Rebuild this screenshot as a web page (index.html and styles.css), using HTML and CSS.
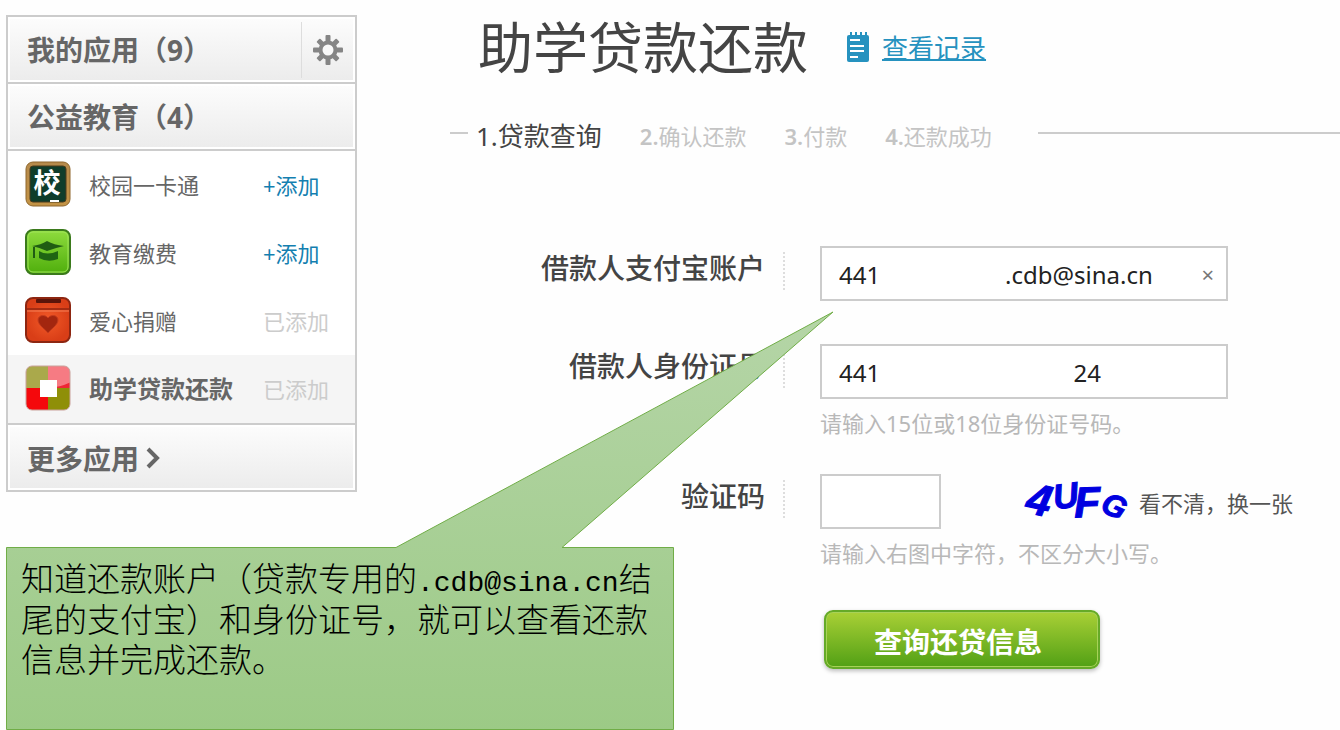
FILE: index.html
```html
<!DOCTYPE html>
<html lang="zh-CN">
<head>
<meta charset="utf-8">
<title>助学贷款还款</title>
<link rel="stylesheet" href="styles.css">
</head>
<body>
<div class="page">
  <aside class="sidebar">
    <div class="side-head">
      <h2>我的应用（9）</h2>
      <button class="gear" type="button" aria-label="设置">
        <svg width="30" height="30" viewBox="-15 -15 30 30">
          <g fill="#858585">
            <rect x="-2.5" y="-15" width="5" height="30" rx="1"/>
            <rect x="-15" y="-2.5" width="30" height="5" rx="1"/>
            <rect x="-2.5" y="-14" width="5" height="28" rx="1" transform="rotate(45)"/>
            <rect x="-2.5" y="-14" width="5" height="28" rx="1" transform="rotate(-45)"/>
            <circle r="9.5"/>
          </g>
          <circle r="5.5" fill="#f8f8f8"/>
        </svg>
      </button>
    </div>
    <div class="side-head"><h2>公益教育（4）</h2></div>
    <ul class="apps">
      <li class="app">
        <svg class="app-icon" viewBox="0 0 46 46">
          <defs><linearGradient id="wood" x2="0" y2="1"><stop offset="0" stop-color="#b58a4c"/><stop offset="1" stop-color="#c39345"/></linearGradient></defs>
          <rect x="1" y="1" width="44" height="44" rx="7" fill="url(#wood)" stroke="#8f672c"/>
          <rect x="5" y="5" width="36" height="36" rx="3" fill="#0f3d2b" stroke="#4a3a1c"/>
          <text class="icon-char" x="22" y="32" text-anchor="middle">校</text>
          <rect x="25" y="39" width="9" height="2" fill="#fff"/>
        </svg>
        <span class="app-name">校园一卡通</span><a class="add" href="#">+添加</a>
      </li>
      <li class="app">
        <svg class="app-icon" viewBox="0 0 46 46">
          <defs><linearGradient id="leaf" x2="0" y2="1"><stop offset="0" stop-color="#8fdc3e"/><stop offset="1" stop-color="#4fae0c"/></linearGradient></defs>
          <rect x="1" y="1" width="44" height="44" rx="7" fill="url(#leaf)" stroke="#3b7a1c" stroke-width="2"/>
          <rect x="3" y="3" width="40" height="40" rx="5" fill="none" stroke="#9fe45a"/>
          <path d="M7 17Q16 16 22 12Q29 16 39 17Q30 19 22 22Q16 19 7 17Z" fill="#205c13"/>
          <path d="M9 18V29" stroke="#205c13" stroke-width="2"/>
          <path d="M14 22Q22 27 33 22V30Q23 34 14 29Z" fill="#1f6413"/>
        </svg>
        <span class="app-name">教育缴费</span><a class="add" href="#">+添加</a>
      </li>
      <li class="app">
        <svg class="app-icon" viewBox="0 0 46 46">
          <defs><radialGradient id="box"><stop offset="0" stop-color="#f25a28"/><stop offset="1" stop-color="#d93e17"/></radialGradient></defs>
          <rect x="1" y="1" width="44" height="44" rx="7" fill="url(#box)" stroke="#8d2611" stroke-width="2"/>
          <rect x="11" y="2" width="25" height="4" rx="1" fill="#5b140a"/>
          <path d="M2 12H44" stroke="#a52c12" stroke-width="2"/>
          <path d="M2 14H44" stroke="#f68258"/>
          <path d="M23 36C20 32 13 28 13 23C13 18 20 17 23 21C26 17 33 18 33 23C33 28 26 32 23 36Z" fill="#a3260f" stroke="#c63c1d"/>
        </svg>
        <span class="app-name">爱心捐赠</span><span class="added">已添加</span>
      </li>
      <li class="app current">
        <svg class="app-icon" viewBox="0 0 46 46">
          <defs><clipPath id="round"><rect x="1" y="1" width="44" height="44" rx="6"/></clipPath></defs>
          <g clip-path="url(#round)">
            <rect width="23" height="23" fill="#aaa94b"/>
            <rect x="23" width="23" height="24" fill="#f67b83"/>
            <rect y="23" width="23" height="23" fill="#f5080c"/>
            <rect x="23" y="23" width="23" height="23" fill="#8f8f08"/>
            <path d="M23 23Q36 22 46 17V23Z" fill="#ee2635"/>
          </g>
          <rect x="1" y="1" width="44" height="44" rx="6" fill="none" stroke="#c9a29b"/>
          <rect x="15" y="15" width="17" height="17" fill="#fff"/>
        </svg>
        <span class="app-name">助学贷款还款</span><span class="added">已添加</span>
      </li>
    </ul>
    <a class="side-head more" href="#">更多应用
      <svg width="14" height="22" viewBox="0 0 14 22"><path d="M2 2L11 11L2 20" fill="none" stroke="#666" stroke-width="4"/></svg>
    </a>
  </aside>

  <main class="main">
    <header class="title-row">
      <h1>助学贷款还款</h1>
      <svg class="note" width="24" height="30" viewBox="0 0 24 30">
        <rect x="1" y="3" width="22" height="27" rx="2" fill="#2692bf"/>
        <path d="M5 0V4M10 0V4M15 0V4M20 0V4" stroke="#2692bf" stroke-width="2"/>
        <path d="M4 8H14M4 14H18M4 19H18M4 25H12" stroke="#fff" stroke-width="2"/>
      </svg>
      <a class="record" href="#">查看记录</a>
    </header>

    <ol class="steps">
      <li class="active">1.贷款查询</li>
      <li><b>2.</b>确认还款</li>
      <li><b>3.</b>付款</li>
      <li><b>4.</b>还款成功</li>
    </ol>

    <form class="form">
      <div class="row">
        <label for="account">借款人支付宝账户</label>
        <div class="field">
          <div class="input-wrap">
            <input id="account" type="text" value="441&nbsp;&nbsp;&nbsp;&nbsp;&nbsp;&nbsp;&nbsp;&nbsp;&nbsp;&nbsp;&nbsp;&nbsp;&nbsp;&nbsp;&nbsp;&nbsp;&nbsp;&nbsp;&nbsp;&nbsp;.cdb@sina.cn">
            <button class="clear" type="button" aria-label="清除">×</button>
          </div>
        </div>
      </div>
      <div class="row">
        <label for="idcard">借款人身份证号</label>
        <div class="field">
          <div class="input-wrap">
            <input id="idcard" type="text" value="441&nbsp;&nbsp;&nbsp;&nbsp;&nbsp;&nbsp;&nbsp;&nbsp;&nbsp;&nbsp;&nbsp;&nbsp;&nbsp;&nbsp;&nbsp;&nbsp;&nbsp;&nbsp;&nbsp;&nbsp;&nbsp;&nbsp;&nbsp;&nbsp;&nbsp;&nbsp;&nbsp;&nbsp;&nbsp;&nbsp;&nbsp;24">
          </div>
          <p class="hint">请输入15位或18位身份证号码。</p>
        </div>
      </div>
      <div class="row">
        <label for="captcha">验证码</label>
        <div class="field">
          <div class="captcha-row">
            <input id="captcha" class="short" type="text">
            <svg class="captcha" width="110" height="55" viewBox="0 0 110 55">
              <g class="captcha-char">
                <text x="6" y="41" font-size="44" transform="rotate(12 18 26)">4</text>
                <text x="32" y="34" font-size="35" transform="rotate(-8 44 22)">U</text>
                <text x="53" y="43" font-size="43" transform="rotate(-2 68 26)">F</text>
                <text x="81" y="42" font-size="31" transform="rotate(24 92 32)">G</text>
              </g>
            </svg>
            <a class="refresh" href="#">看不清，换一张</a>
          </div>
          <p class="hint">请输入右图中字符，不区分大小写。</p>
        </div>
      </div>
      <button class="submit" type="button">查询还贷信息</button>
    </form>
  </main>

  <div class="callout">
    <svg class="callout-shape" width="828" height="419" viewBox="0 0 828 419">
      <defs><linearGradient id="green" x2="0" y2="1"><stop offset="0" stop-color="#b5d5a7"/><stop offset="1" stop-color="#9cca86"/></linearGradient></defs>
      <path d="M.5 236.5H390L827 1L556 236.5H667.5V418.5H.5Z" fill="url(#green)" stroke="#70ad47"/>
    </svg>
    <p class="callout-text">知道还款账户（贷款专用的<span class="mono">.cdb@sina.cn</span>结<br>尾的支付宝）和身份证号，就可以查看还款<br>信息并完成还款。</p>
  </div>
</div>
</body>
</html>
```
FILE: styles.css
```css
* { box-sizing: border-box; }
body {
  margin: 0;
  background: #fefefe;
  color: #555;
  font-family: "Noto Sans", "Noto Sans CJK SC", sans-serif;
  font-size: 22px;
}
h1, h2, p, ul, ol { margin: 0; padding: 0; }
ul, ol { list-style: none; }
button, input { font: inherit; }
a { color: #147fb0; text-decoration: none; }

.page {
  position: relative;
  display: flex;
  align-items: flex-start;
  gap: 93px;
  min-height: 100vh;
  padding: 15px 0 0 6px;
}

/* Sidebar */
.sidebar {
  flex: 0 0 351px;
  border: 2px solid #ccc;
  background: #fff;
}
.side-head {
  display: flex;
  align-items: center;
  height: 65px;
  padding-left: 17px;
  border: 2px solid #fff;
  background: linear-gradient(#fcfcfc, #ececec);
  color: #666;
  font-size: 28px;
  font-weight: 700;
}
.side-head + .side-head { box-shadow: 0 -2px #ccc; margin-top: 2px; }
.side-head h2 { flex: 1; font-size: 28px; line-height: 40px; }
.gear {
  display: flex;
  align-items: center;
  justify-content: center;
  width: 52px;
  height: 56px;
  padding: 0;
  border: 0;
  border-left: 1px solid #ddd;
  background: none;
}
.apps {
  border-top: 2px solid #ccc;
  border-bottom: 2px solid #ccc;
}
.app {
  display: flex;
  align-items: center;
  height: 68px;
  padding: 0 24px 3px 17px;
}
.app.current { background: #f5f5f5; }
.app-icon { width: 46px; height: 46px; margin-right: 18px; }
.icon-char { font-size: 27px; font-weight: 700; fill: #fff; }
.app-name { flex: 1; color: #666; }
.current .app-name { font-size: 24px; font-weight: 700; }
.add, .added { width: 68px; }
.added { color: #ccc; }
.more { gap: 7px; }

/* Heading and steps */
.main { flex: 1; }
.title-row {
  display: flex;
  align-items: center;
  height: 64px;
  padding-left: 28px;
}
.title-row h1 {
  color: #444;
  font-size: 55px;
  font-weight: 400;
  line-height: 64px;
}
.note { margin: 0 12px 0 38px; }
.record {
  color: #2692bf;
  font-size: 26px;
  text-decoration: underline;
  text-decoration-thickness: 2px;
}
.steps {
  display: flex;
  align-items: center;
  gap: 38px;
  height: 40px;
  margin-top: 36px;
  color: #c4c4c4;
}
.steps::before, .steps::after {
  content: "";
  height: 2px;
  margin-bottom: 4px;
  background: #ccc;
}
.steps::before { width: 18px; margin-right: -30px; }
.steps::after { flex: 1; margin-left: 8px; }
.steps .active { color: #444; font-size: 26px; }
.steps b { font-weight: 600; }

/* Form */
.form { padding-top: 91px; }
.row { display: flex; align-items: flex-start; }
.row + .row { margin-top: 43px; }
.row + .row + .row { margin-top: 35px; }
.row label {
  width: 335px;
  height: 38px;
  margin-top: 6px;
  padding-right: 18px;
  border-right: 2px dotted #ddd;
  color: #444;
  font-size: 28px;
  font-weight: 500;
  line-height: 32px;
  text-align: right;
}
.field { padding-left: 35px; }
.input-wrap { position: relative; width: 408px; }
input {
  display: block;
  width: 100%;
  height: 55px;
  padding: 2px 17px 0;
  border: 2px solid #ccc;
  border-radius: 0;
  background: #fff;
  color: #222;
  font-size: 24px;
}
.clear {
  position: absolute;
  top: 12px;
  right: 10px;
  padding: 0 4px;
  border: 0;
  background: none;
  color: #777;
  line-height: 32px;
}
.hint {
  margin-top: 8px;
  color: #b8b8b8;
  line-height: 32px;
}
.captcha-row { display: flex; align-items: center; }
.short { width: 121px; }
.captcha { margin: 0 8px 0 80px; overflow: visible; }
.captcha-char {
  fill: #0000e0;
  stroke: #0000e0;
  font-family: "Liberation Sans", sans-serif;
  font-style: italic;
  font-weight: 700;
}
.refresh { color: #555; }
.submit {
  display: block;
  width: 276px;
  height: 59px;
  margin: 41px 0 0 374px;
  padding: 4px 8px 0 0;
  border: 2px solid #65aa28;
  border-radius: 9px;
  background: linear-gradient(#a9d036, #52a015);
  box-shadow: inset 0 0 0 1px #a8d258, 0 2px 4px #bbb;
  color: #fff;
  font-size: 28px;
  font-weight: 700;
  line-height: 32px;
}

/* Annotation laid over the form */
.callout { position: absolute; left: 6px; top: 311px; width: 828px; pointer-events: none; }
.callout-shape { display: block; }
.callout-text {
  position: absolute;
  left: 15px;
  top: 246px;
  color: #000;
  font-family: "Noto Sans CJK SC", sans-serif;
  font-size: 33px;
  font-weight: 300;
  line-height: 40px;
  white-space: nowrap;
}
.mono { font-family: "Liberation Mono", monospace; font-size: 28px; line-height: 28px; }
```
